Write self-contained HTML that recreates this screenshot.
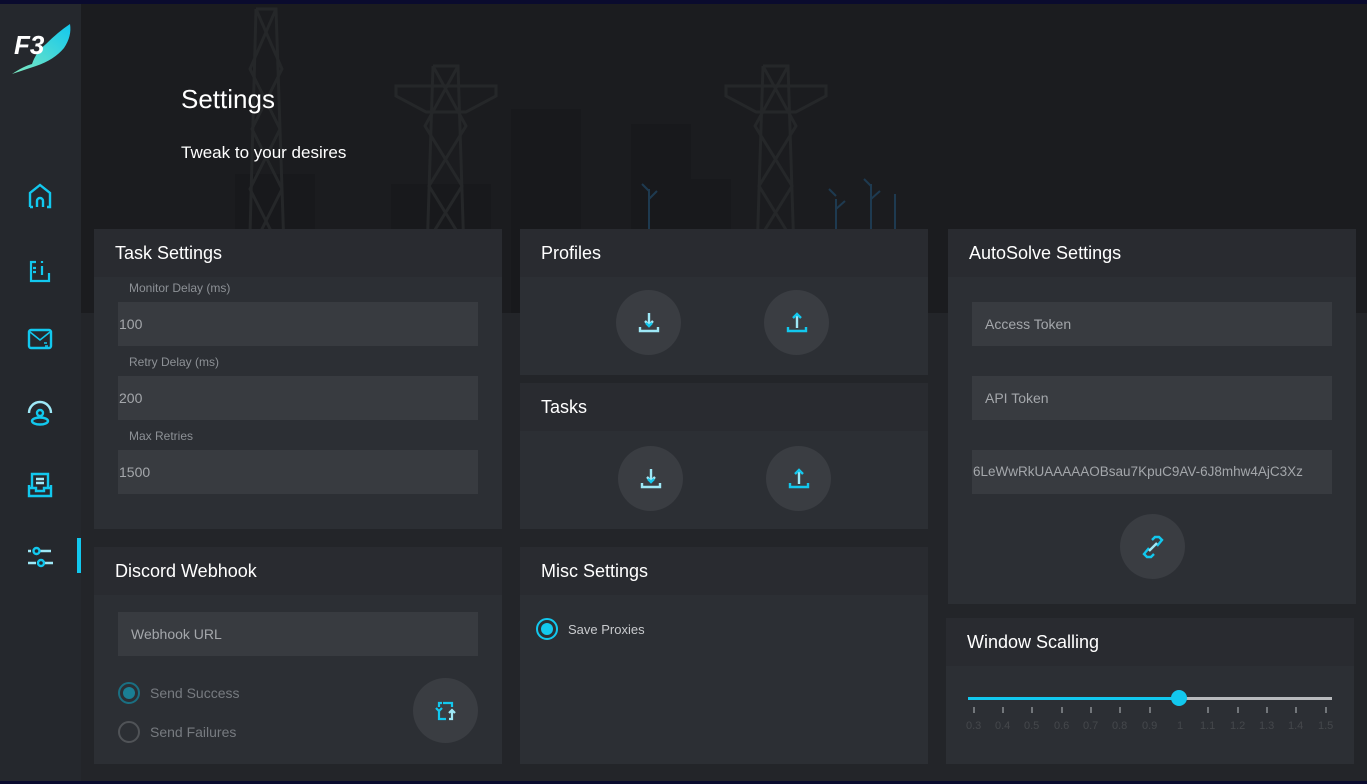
<!DOCTYPE html>
<html><head><meta charset="utf-8"><style>
*{margin:0;padding:0;box-sizing:border-box}
body{width:1367px;height:784px;overflow:hidden;background:#232529;font-family:"Liberation Sans","DejaVu Sans",sans-serif;position:relative}
.topbar{position:absolute;left:0;top:0;width:1367px;height:4px;background:#0a0b2e}
.botbar{position:absolute;left:0;top:781px;width:1367px;height:3px;background:#0a0b2e}
.side{position:absolute;left:0;top:4px;width:81px;height:777px;background:#25282d}
.hero{position:absolute;left:81px;top:4px;width:1286px;height:309px;background:#1b1c1f}
.card{position:absolute;background:#2c2f34}
.card .hd{height:48px;background:#292b30;color:#fff;font-size:18px;padding:14px 0 0 21px}
.lbl{position:absolute;color:#8d9196;font-size:12px}
.inp{position:absolute;background:#383b40;color:#a4a7ab;font-size:14px;height:44px;line-height:44px}
.cbtn{position:absolute;width:65px;height:65px;border-radius:50%;background:#3a3d42}
.cbtn svg{position:absolute;left:20px;top:20px}
.ic{position:absolute;left:27px}
</style></head><body>
<div class="topbar"></div>
<div class="side">
<svg style="position:absolute;left:10px;top:18px" width="62" height="56" viewBox="0 0 62 56">
<defs><linearGradient id="g" x1="0" y1="1" x2="1" y2="0"><stop offset="0" stop-color="#7de8c0"/><stop offset="1" stop-color="#12c8ee"/></linearGradient></defs>
<path d="M2 52 Q14 44 22 42 Q26 30 36 22 Q48 10 60 2 Q62 14 54 26 Q44 38 26 44 Q14 48 2 52 Z" fill="url(#g)"/>
<text x="4" y="32" font-family="Liberation Sans" font-weight="bold" font-style="italic" font-size="26" fill="#fff">F3</text>
</svg>
<svg class="ic" style="top:179px" width="26" height="26" viewBox="0 0 26 26" fill="none" stroke="#12c8ee" stroke-width="2.4"><path d="M3 24V10L13 2l10 8v14h-3"/><path d="M3 24h3M10 24v-6a3 3 0 016 0v6"/></svg>
<svg class="ic" style="top:253px" width="26" height="26" viewBox="0 0 26 26" fill="none" stroke="#12c8ee" stroke-width="2.2"><path d="M9 5H4v19h18v-8"/><path d="M6 11h3M6 15h3M15 4v2M15 9v9"/></svg>
<svg class="ic" style="top:324px" width="26" height="24" viewBox="0 0 26 24" fill="none" stroke="#12c8ee" stroke-width="2.4"><rect x="2" y="2" width="22" height="18" rx="2"/><path d="M3 4l10 8 10-8M17 15h3M18 18h3" stroke-width="1.6"/></svg>
<svg class="ic" style="top:396px" width="26" height="26" viewBox="0 0 26 26" fill="none" stroke="#12c8ee" stroke-width="2.4"><path d="M2 13a11 11 0 0122 0" stroke="#9ee8f6"/><circle cx="13" cy="13" r="3"/><ellipse cx="13" cy="21" rx="8" ry="3.5"/></svg>
<svg class="ic" style="top:468px" width="26" height="26" viewBox="0 0 26 26" fill="none" stroke="#12c8ee" stroke-width="2.4"><path d="M5 16V2h16v14"/><path d="M9 7h8M9 11h8" stroke="#9ee8f6"/><path d="M2 13v11h22V13M2 16h7v3h8v-3h7"/></svg>
<svg class="ic" style="top:540px" width="28" height="26" viewBox="0 0 28 26" fill="none" stroke="#9ee8f6" stroke-width="2.4"><path d="M1 7h3M13 7h11M1 19h8M18 19h8"/><circle cx="9.5" cy="7" r="3" stroke="#12c8ee"/><circle cx="14" cy="19" r="3" stroke="#12c8ee"/></svg>
<div style="position:absolute;left:77px;top:534px;width:4px;height:35px;background:#12c8ee"></div>
</div>
<div class="hero">
<svg width="1286" height="309" style="position:absolute;left:0;top:0" fill="none" stroke="#252729" stroke-width="3">
<rect x="154" y="170" width="80" height="140" fill="#18191c" stroke="none"/>
<rect x="310" y="180" width="100" height="130" fill="#18191c" stroke="none"/>
<rect x="430" y="105" width="70" height="205" fill="#18191c" stroke="none"/>
<rect x="550" y="120" width="60" height="190" fill="#18191c" stroke="none"/>
<rect x="610" y="175" width="40" height="135" fill="#18191c" stroke="none"/>
<path d="M175 5h20l10 300M175 5l-8 300M175 5l26 60-30 60 30 60-30 60M195 5l-26 60 30 60-30 60 30 60"/>
<g transform="translate(320,62)"><path d="M32 0h25l8 250M32 0l-8 250M-5 20v10l30 16h40l30-16V20zM32 0l33 60-37 60 37 60-37 60M57 0l-33 60 37 60-37 60 37 60"/></g>
<g transform="translate(650,62)"><path d="M32 0h25l8 250M32 0l-8 250M-5 20v10l30 16h40l30-16V20zM32 0l33 60-37 60 37 60-37 60M57 0l-33 60 37 60-37 60 37 60"/></g>
<path d="M568 185v45M561 180l7 7M568 195l8-8M755 195v35M748 185l7 7M755 205l9-8M790 180v50M783 175l7 7M790 195l9-8M814 190v40" stroke="#1e3a50" stroke-width="2"/>
</svg>
<div style="position:absolute;left:100px;top:80px;color:#fff;font-size:26px">Settings</div>
<div style="position:absolute;left:100px;top:139px;color:#fff;font-size:17px">Tweak to your desires</div>
</div>

<div class="card" style="left:94px;top:229px;width:408px;height:300px"><div class="hd">Task Settings</div>
<div class="lbl" style="left:35px;top:52px">Monitor Delay (ms)</div><div class="inp" style="left:24px;top:73px;width:360px;padding-left:1px">100</div>
<div class="lbl" style="left:35px;top:126px">Retry Delay (ms)</div><div class="inp" style="left:24px;top:147px;width:360px;padding-left:1px">200</div>
<div class="lbl" style="left:35px;top:200px">Max Retries</div><div class="inp" style="left:24px;top:221px;width:360px;padding-left:1px">1500</div>
</div>

<div class="card" style="left:520px;top:229px;width:408px;height:146px"><div class="hd">Profiles</div>
<div class="cbtn" style="left:96px;top:61px"><svg width="26" height="26" viewBox="0 0 26 26" fill="none" stroke-width="2.4"><path d="M13 3v12M9 11l4 4 4-4" stroke="#9ee8f6"/><path d="M4 17v4h18v-4" stroke="#9ee8f6"/><path d="M10 13l3 3 3-3" stroke="#12c8ee"/></svg></div>
<div class="cbtn" style="left:244px;top:61px"><svg width="26" height="26" viewBox="0 0 26 26" fill="none" stroke-width="2.4"><path d="M13 5v13" stroke="#9ee8f6"/><path d="M9 8l4-4 4 4M4 17v4h18v-4" stroke="#12c8ee"/></svg></div>
</div>
<div class="card" style="left:520px;top:383px;width:408px;height:146px"><div class="hd">Tasks</div>
<div class="cbtn" style="left:98px;top:63px"><svg width="26" height="26" viewBox="0 0 26 26" fill="none" stroke-width="2.4"><path d="M13 3v12M9 11l4 4 4-4" stroke="#9ee8f6"/><path d="M4 17v4h18v-4" stroke="#9ee8f6"/><path d="M10 13l3 3 3-3" stroke="#12c8ee"/></svg></div>
<div class="cbtn" style="left:246px;top:63px"><svg width="26" height="26" viewBox="0 0 26 26" fill="none" stroke-width="2.4"><path d="M13 5v13" stroke="#9ee8f6"/><path d="M9 8l4-4 4 4M4 17v4h18v-4" stroke="#12c8ee"/></svg></div>
</div>

<div class="card" style="left:948px;top:229px;width:408px;height:375px"><div class="hd">AutoSolve Settings</div>
<div class="inp" style="left:24px;top:73px;width:360px;padding-left:13px">Access Token</div>
<div class="inp" style="left:24px;top:147px;width:360px;padding-left:13px">API Token</div>
<div class="inp" style="left:24px;top:221px;width:360px;padding-left:1px;font-size:13.5px">6LeWwRkUAAAAAOBsau7KpuC9AV-6J8mhw4AjC3Xz</div>
<div class="cbtn" style="left:172px;top:285px"><svg width="26" height="26" viewBox="0 0 26 26" fill="none" stroke-width="2.4"><path d="M12 6l3-3 4 0 3 3-5 6M14 20l-3 3-4 0-3-3 5-6" stroke="#12c8ee"/><path d="M9 17l8-8" stroke="#9ee8f6"/></svg></div>
</div>

<div class="card" style="left:94px;top:547px;width:408px;height:217px"><div class="hd">Discord Webhook</div>
<div class="inp" style="left:24px;top:65px;width:360px;padding-left:13px">Webhook URL</div>
<div style="position:absolute;left:24px;top:135px;width:22px;height:22px;border-radius:50%;border:2px solid #1a6f82"><div style="margin:3px;width:12px;height:12px;border-radius:50%;background:#1a7f94"></div></div>
<div style="position:absolute;left:56px;top:138px;color:#777b80;font-size:14px">Send Success</div>
<div style="position:absolute;left:24px;top:174px;width:22px;height:22px;border-radius:50%;border:2px solid #505357"></div>
<div style="position:absolute;left:56px;top:177px;color:#777b80;font-size:14px">Send Failures</div>
<div class="cbtn" style="left:319px;top:131px"><svg width="26" height="26" viewBox="0 0 26 26" fill="none" stroke-width="2.2"><path d="M10 5h9v4M6 13v8h7" stroke="#12c8ee"/><path d="M3 10l3 3 3-3" stroke="#12c8ee"/><path d="M16 21h3v-9M16 15l3-3 3 3" stroke="#9ee8f6"/><path d="M6 9V5h3" stroke="#12c8ee"/></svg></div>
</div>

<div class="card" style="left:520px;top:547px;width:408px;height:217px"><div class="hd">Misc Settings</div>
<div style="position:absolute;left:16px;top:71px;width:22px;height:22px;border-radius:50%;border:2px solid #12c8ee"><div style="margin:3px;width:12px;height:12px;border-radius:50%;background:#12c8ee"></div></div>
<div style="position:absolute;left:48px;top:75px;color:#c8cacd;font-size:13px">Save Proxies</div>
</div>

<div class="card" style="left:946px;top:618px;width:408px;height:146px"><div class="hd">Window Scalling</div>
<div style="position:absolute;left:22px;top:79px;width:212px;height:3px;background:#12c8ee"></div>
<div style="position:absolute;left:234px;top:79px;width:152px;height:3px;background:#b8babd"></div>
<div style="position:absolute;left:225px;top:72px;width:16px;height:16px;border-radius:50%;background:#12c8ee"></div>
<div style="position:absolute;left:0;top:87px;width:408px;height:30px;font-size:11px;color:#45484c">
<span style="position:absolute;left:20px;top:15px">0.3</span><span style="position:absolute;left:49px;top:15px">0.4</span><span style="position:absolute;left:78px;top:15px">0.5</span><span style="position:absolute;left:108px;top:15px">0.6</span><span style="position:absolute;left:137px;top:15px">0.7</span><span style="position:absolute;left:166px;top:15px">0.8</span><span style="position:absolute;left:196px;top:15px">0.9</span><span style="position:absolute;left:231px;top:15px">1</span><span style="position:absolute;left:254px;top:15px">1.1</span><span style="position:absolute;left:284px;top:15px">1.2</span><span style="position:absolute;left:313px;top:15px">1.3</span><span style="position:absolute;left:342px;top:15px">1.4</span><span style="position:absolute;left:372px;top:15px">1.5</span>
<svg width="408" height="12" style="position:absolute;left:0;top:0" stroke="#8a8d91" stroke-width="1.5"><path d="M28 2v6M57 2v6M86 2v6M116 2v6M145 2v6M174 2v6M204 2v6M262 2v6M292 2v6M321 2v6M350 2v6M380 2v6"/></svg>
</div>
</div>
<div class="botbar"></div>
</body></html>
